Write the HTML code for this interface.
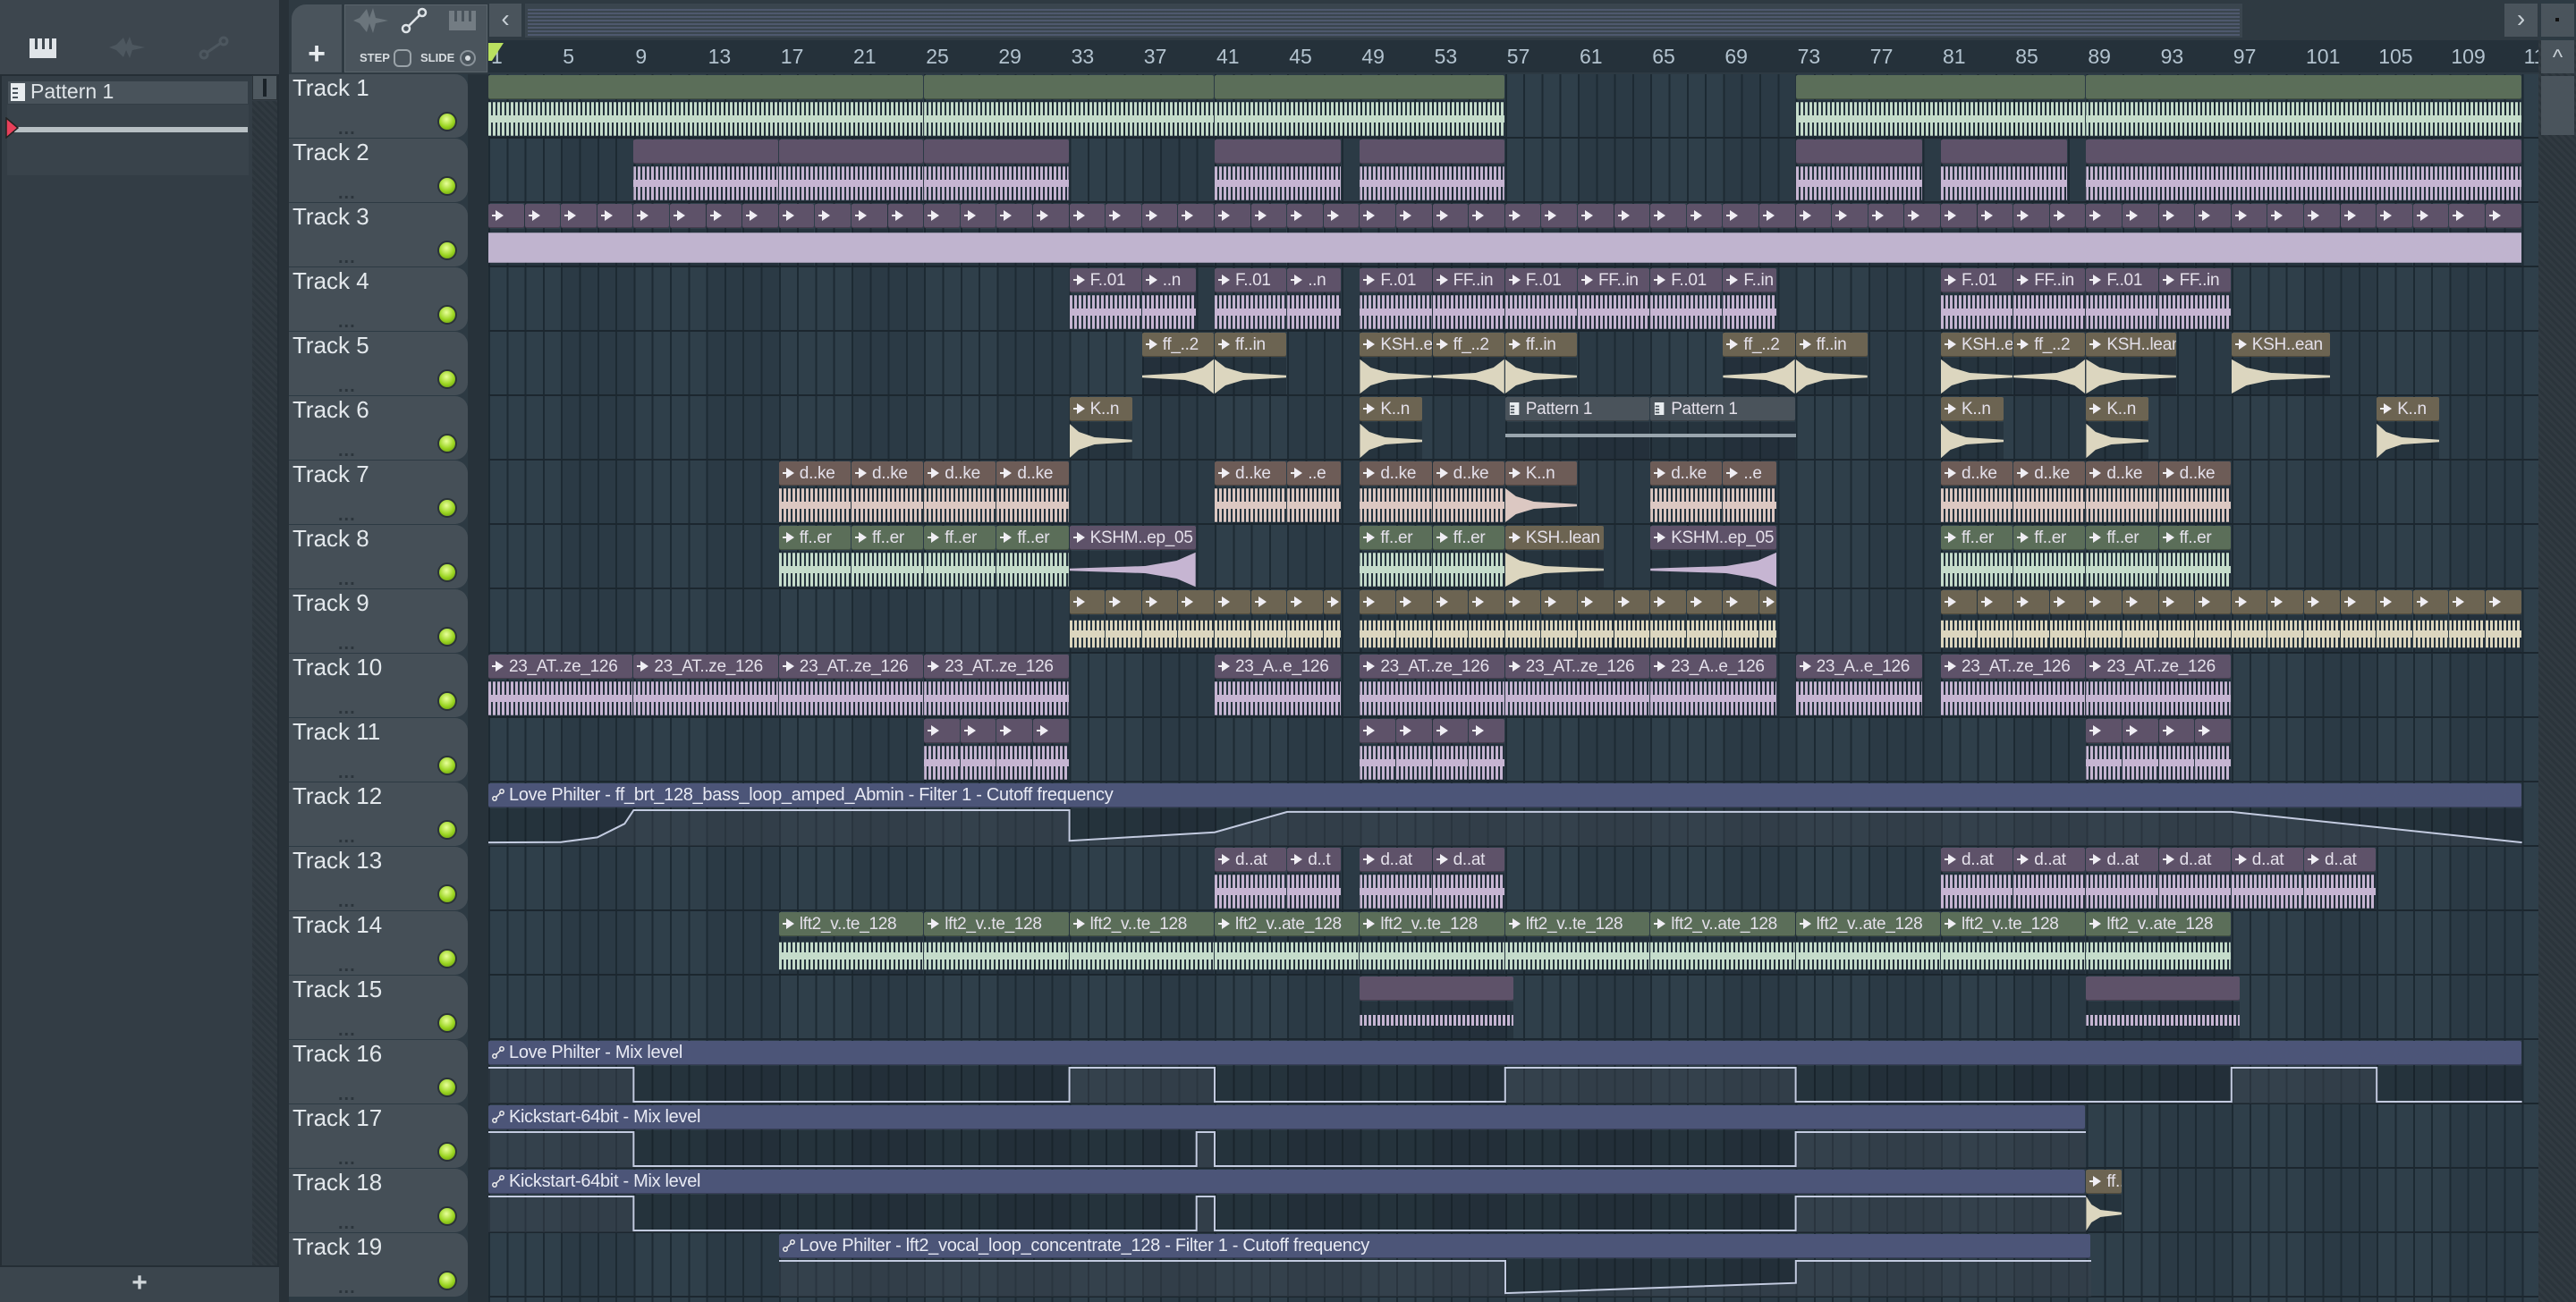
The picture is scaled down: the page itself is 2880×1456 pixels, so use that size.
<!DOCTYPE html>
<html><head><meta charset="utf-8">
<style>
*{box-sizing:border-box;margin:0;padding:0}
body{width:2880px;height:1456px;overflow:hidden;background:#2d3a43;font-family:"Liberation Sans Narrow","Liberation Sans",sans-serif;position:relative}
.abs{position:absolute}
#grid{position:absolute;left:546px;top:83px;width:2292px;height:1373px;
background:
repeating-linear-gradient(180deg,transparent 0 70px,#1c272f 70px 72px),
repeating-linear-gradient(90deg,#1d2a33 0 2px,transparent 2px 20.3px),
repeating-linear-gradient(90deg,#2f3f4a 0 81.2px,#2b3a45 81.2px 162.4px);}
.clip{position:absolute;height:70px;overflow:hidden}
.t{position:absolute;left:0;right:1px;top:0;height:27px;border-radius:2px;color:#e4e0ea;font-size:19px;line-height:27px;white-space:nowrap;overflow:hidden;padding-left:4px;box-shadow:inset 0 -1px 0 rgba(0,0,0,.25);letter-spacing:-0.3px}
.b{position:absolute;left:0;right:1px;top:28px;height:42px;background:rgba(22,32,40,.35)}
.w{position:absolute;left:0;right:0;top:1px;bottom:1px}
.ic{display:inline-block;width:14px;height:14px;margin-right:5px;vertical-align:-1px}
.hdr{position:absolute;left:323px;width:200px;height:71px;background:#454f57;border-radius:0 14px 14px 0}
.hdr .n{position:absolute;left:4px;top:0;font-size:26px;color:#e3e8ec}
.hdr .d{position:absolute;left:55px;top:50px;color:#2c353c;font-size:20px;letter-spacing:1px;font-weight:bold}
.hdr .led{position:absolute;left:166px;top:42px;width:22px;height:22px;border-radius:50%;background:radial-gradient(circle at 45% 35%,#e8ff9a,#9ad420 55%,#5c8a10);border:2px solid #2a3238}
.rn{position:absolute;top:50px;font-size:23px;color:#b3c3cf}
</style></head><body>
<div class="abs" style="left:0;top:0;width:320px;height:83px;background:#3d464e"></div>
<svg class="abs" style="left:30px;top:38px" width="40" height="30"><rect x="3" y="5" width="30" height="22" fill="#e0e4e8"/><rect x="9" y="5" width="3" height="12" fill="#3d464e"/><rect x="17" y="5" width="3" height="12" fill="#3d464e"/><rect x="25" y="5" width="3" height="12" fill="#3d464e"/></svg>
<svg class="abs" style="left:120px;top:38px" width="45" height="30"><path d="M2 15 L10 12 L14 8 L18 4 L21 12 L25 3 L28 12 L33 13 L42 15 L33 17 L28 18 L25 27 L21 18 L18 26 L14 22 L10 18 Z" fill="#4d575f"/></svg>
<svg class="abs" style="left:220px;top:38px" width="40" height="30"><circle cx="8" cy="23" r="4" stroke="#4d575f" stroke-width="3" fill="none"/><circle cx="30" cy="8" r="4" stroke="#4d575f" stroke-width="3" fill="none"/><line x1="11" y1="21" x2="27" y2="10" stroke="#4d575f" stroke-width="3"/></svg>
<div class="abs" style="left:0;top:83px;width:312px;height:1334px;background:#333d45;border:2px solid #252e35"></div>
<div class="abs" style="left:9px;top:91px;width:268px;height:25px;background:#49535b"></div>
<svg class="abs" style="left:12px;top:93px" width="16" height="20"><rect width="16" height="20" fill="#e8ecef"/><rect x="2" y="5" width="6" height="2" fill="#49535b"/><rect x="2" y="10" width="6" height="2" fill="#49535b"/><rect x="2" y="15" width="6" height="2" fill="#49535b"/></svg>
<div class="abs" style="left:34px;top:89px;font-size:23px;color:#dfe4e8">Pattern 1</div>
<div class="abs" style="left:8px;top:117px;width:270px;height:79px;background:#39434b"></div>
<div class="abs" style="left:16px;top:142px;width:261px;height:6px;background:#b8c0c4"></div>
<svg class="abs" style="left:6px;top:131px" width="16" height="24"><path d="M1 1 L14 12 L1 23 Z" fill="#e8405a" stroke="#222" stroke-width="1.5"/></svg>
<div class="abs" style="left:282px;top:84px;width:28px;height:28px;background:#4e585f;border:1px solid #2a3238"></div>
<div class="abs" style="left:294px;top:88px;width:4px;height:20px;background:#1a2228"></div>
<div class="abs" style="left:282px;top:113px;width:28px;height:1302px;background:repeating-linear-gradient(45deg,#2b343b 0 3px,#313a41 3px 6px)"></div>
<div class="abs" style="left:0;top:1417px;width:312px;height:39px;background:#3b454d;color:#d0d6da;font-size:30px;text-align:center;line-height:36px;font-weight:bold">+</div>
<div class="abs" style="left:312px;top:0;width:11px;height:1456px;background:#283138"></div>
<div class="abs" style="left:323px;top:0;width:2517px;height:45px;background:#2f3a42"></div>
<div class="abs" style="left:323px;top:0;width:223px;height:83px;background:#2f3a42"></div>
<div class="abs" style="left:326px;top:5px;width:56px;height:76px;background:#4a545c;border-radius:16px 0 0 0;color:#e8ecef;font-size:34px;font-weight:bold;text-align:center;line-height:110px">+</div>
<div class="abs" style="left:385px;top:5px;width:160px;height:76px;background:#4a545c;border:1px solid #5a646b"></div>
<svg class="abs" style="left:392px;top:8px" width="150" height="30"><path d="M3 15 L10 12 L14 7 L18 2 L21 12 L25 1 L28 12 L33 13 L42 15 L33 17 L28 18 L25 29 L21 18 L18 28 L14 23 L10 18 Z" fill="#6b757c"/><circle cx="62" cy="24" r="4" stroke="#dfe4e8" stroke-width="2.5" fill="none"/><circle cx="80" cy="6" r="4" stroke="#dfe4e8" stroke-width="2.5" fill="none"/><line x1="65" y1="21" x2="77" y2="9" stroke="#dfe4e8" stroke-width="2.5"/><rect x="110" y="4" width="30" height="22" fill="#737c83"/><rect x="116" y="4" width="3" height="12" fill="#4a545c"/><rect x="124" y="4" width="3" height="12" fill="#4a545c"/><rect x="132" y="4" width="3" height="12" fill="#4a545c"/></svg>
<div class="abs" style="left:402px;top:57px;font-size:13px;color:#d8dde1;font-weight:bold">STEP</div>
<div class="abs" style="left:440px;top:55px;width:20px;height:20px;border:2px solid #9aa3a9;border-radius:6px"></div>
<div class="abs" style="left:470px;top:57px;font-size:13px;color:#d8dde1;font-weight:bold">SLIDE</div>
<div class="abs" style="left:514px;top:56px;width:18px;height:18px;border:2px solid #8a939a;border-radius:50%"></div>
<div class="abs" style="left:520px;top:62px;width:6px;height:6px;background:#d8dde1;border-radius:50%"></div>
<div class="abs" style="left:547px;top:4px;width:36px;height:37px;background:#4a545c;color:#c8d0d6;font-size:28px;text-align:center;line-height:34px">‹</div>
<div class="abs" style="left:587px;top:4px;width:1920px;height:38px;background:#3a454e"></div>
<div class="abs" style="left:590px;top:10px;width:1914px;height:30px;background:repeating-linear-gradient(180deg,#56617a 0 2px,transparent 2px 4px);opacity:.7"></div>
<div class="abs" style="left:2800px;top:4px;width:37px;height:37px;background:#4a545c;color:#c8d0d6;font-size:28px;text-align:center;line-height:34px">›</div>
<div class="abs" style="left:2841px;top:4px;width:37px;height:37px;background:#4a545c"></div>
<div class="abs" style="left:2857px;top:20px;width:4px;height:4px;background:#111"></div>
<div class="abs" style="left:546px;top:45px;width:2292px;height:36px;background:#25313a"></div>
<div id="ruler"></div>
<svg class="abs" style="left:546px;top:48px" width="18" height="22"><path d="M0 0 L17 0 L4 20 L0 20 Z" fill="#b9e060"/></svg>
<div class="abs" style="left:2838px;top:45px;width:42px;height:1411px;background:repeating-linear-gradient(45deg,#2b343b 0 3px,#313a41 3px 6px)"></div>
<div class="abs" style="left:2841px;top:45px;width:37px;height:37px;background:#4a545c;color:#c8d0d6;font-size:24px;text-align:center;line-height:40px">^</div>
<div class="abs" style="left:2841px;top:85px;width:37px;height:66px;background:#4a545c"></div>
<div class="abs" style="left:523px;top:83px;width:23px;height:1373px;background:#27323a"></div>
<div id="grid"></div>
<div id="hdrs"></div>
<div id="clips"></div>
<script>
var GX=546,BW=20.3,RT=83,RH=72;
var C={P:['#5e5269','#c6b5d2'],G:['#5b6e59','#c5dccb'],T:['#6c6452','#dcd6bf'],B:['#6d5c57','#dcc8c2'],A:['#4c5578','#aab3cc'],N:['#4a535b','#9aa6ae']};
var ICON='<svg class="ic" viewBox="0 0 14 14"><path d="M0 7H6" stroke="#eee" stroke-width="2"/><path d="M4 1L13 7L4 13Z" fill="#f0eef4"/></svg>';
var AIC='<svg class="ic" viewBox="0 0 14 14"><circle cx="3" cy="11" r="2.2" stroke="#eee" stroke-width="1.5" fill="none"/><circle cx="11" cy="3" r="2.2" stroke="#eee" stroke-width="1.5" fill="none"/><path d="M4.5 9.5L9.5 4.5" stroke="#eee" stroke-width="1.5"/></svg>';
var PIC='<svg class="ic" viewBox="0 0 14 16"><rect width="12" height="16" fill="#e8ecef"/><rect x="1" y="4" width="5" height="2" fill="#4a535b"/><rect x="1" y="8" width="5" height="2" fill="#4a535b"/><rect x="1" y="12" width="5" height="2" fill="#4a535b"/></svg>';
var SH={dense:'polygon(0 3%,100% 3%,100% 97%,0 97%)',mid:'polygon(0 12%,100% 12%,100% 88%,0 88%)',
rise:'polygon(0 47%,60% 40%,85% 25%,100% 2%,100% 98%,85% 75%,60% 60%,0 53%)',
decay:'polygon(0 2%,15% 25%,40% 40%,100% 47%,100% 53%,40% 60%,15% 75%,0 98%)',
thin:'polygon(0 35%,100% 35%,100% 65%,0 65%)'};
var H='';
function clip(tr,s,l,col,lab,shape,icon){
 var c=C[col],x=GX+s*BW,w=l*BW,y=RT+(tr-1)*RH+1;
 var ic=icon===undefined?ICON:icon;
 var wav='';
 if(shape){var bg=(shape==='rise'||shape==='decay')?c[1]:'repeating-linear-gradient(90deg,'+c[1]+' 0 3px,rgba(0,0,0,0) 3px 5px)';
 wav='<div class="w" style="background:'+bg+';clip-path:'+SH[shape]+'"></div>';
 if(shape==='dense'||shape==='mid')wav+='<div class="w" style="top:17px;bottom:17px;background:'+c[1]+'"></div>';}
 H+='<div class="clip" style="left:'+x+'px;top:'+y+'px;width:'+w+'px"><div class="t" style="background:'+c[0]+'">'+(lab?ic+lab:'')+'</div><div class="b">'+wav+'</div></div>';
}
function seq(tr,s,e,step,col,lab,shape){for(var b=s;b<e;b+=step)clip(tr,b,Math.min(step,e-b),col,lab,shape);}
[[0,24],[24,16],[40,16],[72,16],[88,24]].forEach(function(a){clip(1,a[0],a[1],'G','','dense');});
[[8,8],[16,8],[24,8],[40,7],[48,8],[72,7],[80,7],[88,24]].forEach(function(a){clip(2,a[0],a[1],'P','','dense');});
for(var b=0;b<112;b+=2)clip(3,b,2,'P',' ',null);
H+='<div class="abs" style="left:546px;top:'+(RT+2*RH+30)+'px;width:2273px;height:40px;background:#c0b4cf;clip-path:polygon(0 8%,100% 8%,100% 92%,0 92%)"></div>';
[[32,4,'F..01'],[36,3,'..n'],[40,4,'F..01'],[44,3,'..n'],[48,4,'F..01'],[52,4,'FF..in'],[56,4,'F..01'],[60,4,'FF..in'],[64,4,'F..01'],[68,3,'F..in'],[80,4,'F..01'],[84,4,'FF..in'],[88,4,'F..01'],[92,4,'FF..in']].forEach(function(a){clip(4,a[0],a[1],'P',a[2],'dense');});
[[36,4,'ff_..2','rise'],[40,4,'ff..in','decay'],[48,4,'KSH..e','decay'],[52,4,'ff_..2','rise'],[56,4,'ff..in','decay'],[68,4,'ff_..2','rise'],[72,4,'ff..in','decay'],[80,4,'KSH..e','decay'],[84,4,'ff_..2','rise'],[88,5,'KSH..lean','decay'],[96,5.5,'KSH..ean','decay']].forEach(function(a){clip(5,a[0],a[1],'T',a[2],a[3]);});
[[32,3.5],[48,3.5],[80,3.5],[88,3.5],[104,3.5]].forEach(function(a){clip(6,a[0],a[1],'T','K..n','decay');});
[56,64].forEach(function(s){clip(6,s,8,'N','Pattern 1',null,PIC);});
H+='<div class="abs" style="left:'+(GX+56*BW)+'px;top:'+(RT+5*RH+42)+'px;width:'+(16*BW)+'px;height:4px;background:#9aa6ae"></div>';
seq(7,16,32,4,'B','d..ke','dense');
[[40,4,'d..ke'],[44,3,'..e'],[48,4,'d..ke'],[52,4,'d..ke'],[64,4,'d..ke'],[68,3,'..e']].forEach(function(a){clip(7,a[0],a[1],'B',a[2],'dense');});
clip(7,56,4,'B','K..n','decay');
seq(7,80,96,4,'B','d..ke','dense');
seq(8,16,32,4,'G','ff..er','dense');clip(8,32,7,'P','KSHM..ep_05','rise');
clip(8,48,4,'G','ff..er','dense');clip(8,52,4,'G','ff..er','dense');clip(8,56,5.5,'T','KSH..lean','decay');
clip(8,64,7,'P','KSHM..ep_05','rise');seq(8,80,96,4,'G','ff..er','dense');
[[32,47],[48,71],[80,112]].forEach(function(a){for(var b=a[0];b<a[1];b+=2)clip(9,b,Math.min(2,a[1]-b),'T',' ','mid');});
seq(10,0,32,8,'P','23_AT..ze_126','dense');clip(10,40,7,'P','23_A..e_126','dense');
clip(10,48,8,'P','23_AT..ze_126','dense');clip(10,56,8,'P','23_AT..ze_126','dense');clip(10,64,7,'P','23_A..e_126','dense');
clip(10,72,7,'P','23_A..e_126','dense');clip(10,80,8,'P','23_AT..ze_126','dense');clip(10,88,8,'P','23_AT..ze_126','dense');
[24,48,88].forEach(function(s){for(var b=s;b<s+8;b+=2)clip(11,b,2,'P',' ','dense');});
[[40,4,'d..at'],[44,3,'d..t'],[48,4,'d..at'],[52,4,'d..at']].forEach(function(a){clip(13,a[0],a[1],'P',a[2],'dense');});
seq(13,80,104,4,'P','d..at','dense');
['lft2_v..te_128','lft2_v..te_128','lft2_v..te_128','lft2_v..ate_128','lft2_v..te_128','lft2_v..te_128','lft2_v..ate_128','lft2_v..ate_128','lft2_v..te_128','lft2_v..ate_128'].forEach(function(l,i){clip(14,16+i*8,8,'G',l,'mid');});
clip(15,48,8.5,'P','','thin');clip(15,88,8.5,'P','','thin');
function auto(tr,s,e,lab,pts){var c=C.A,x=GX+s*BW,w=(e-s)*BW,y=RT+(tr-1)*RH+1;
 var pp=pts.map(function(p){return ((p[0]-s)*BW).toFixed(1)+','+(40-p[1]*38).toFixed(1);}).join(' ');
 H+='<div class="clip" style="left:'+x+'px;top:'+y+'px;width:'+w+'px"><div class="t" style="background:'+c[0]+';color:#e8eaf4;font-size:20px">'+AIC+lab+'</div><svg class="b" style="background:rgba(15,22,30,.3)" width="'+w+'" height="42"><polygon points="'+pp+' '+w+',42 0,42" fill="rgba(120,135,150,.18)"/><polyline points="'+pp+'" fill="none" stroke="#c3cbe0" stroke-width="2"/></svg></div>';}
auto(12,0,112,'Love Philter - ff_brt_128_bass_loop_amped_Abmin - Filter 1 - Cutoff frequency',[[0,0.05],[4,0.06],[6,0.2],[7.5,0.6],[8,1],[32,1],[32,0.1],[40,0.35],[44,0.95],[96,0.95],[112,0.05]]);
auto(16,0,112,'Love Philter - Mix level',[[0,1],[8,1],[8,0],[32,0],[32,1],[40,1],[40,0],[56,0],[56,1],[72,1],[72,0],[96,0],[96,1],[104,1],[104,0],[112,0]]);
auto(17,0,88,'Kickstart-64bit - Mix level',[[0,1],[8,1],[8,0],[39,0],[39,1],[40,1],[40,0],[72,0],[72,1],[88,1]]);
auto(18,0,88,'Kickstart-64bit - Mix level',[[0,1],[8,1],[8,0],[39,0],[39,1],[40,1],[40,0],[72,0],[72,1],[88,1]]);
clip(18,88,2,'T','ff..in','decay');
auto(19,16,88.3,'Love Philter - lft2_vocal_loop_concentrate_128 - Filter 1 - Cutoff frequency',[[16,1],[56,1],[56,0.05],[72,0.35],[72,1],[88.3,1]]);
document.getElementById('clips').innerHTML=H;
var h='';for(var i=1;i<=19;i++){h+='<div class="hdr" style="top:'+(RT+(i-1)*RH)+'px"><div class="n">Track '+i+'</div><div class="d">...</div><div class="led"></div></div>';}
document.getElementById('hdrs').innerHTML=h;
var r='';for(var b=1;b<=113;b+=4){r+='<div class="rn" style="left:'+(GX+(b-1)*BW+(b==1?3:2))+'px">'+b+'</div>';}
document.getElementById('ruler').innerHTML=r;
</script>
</body></html>
